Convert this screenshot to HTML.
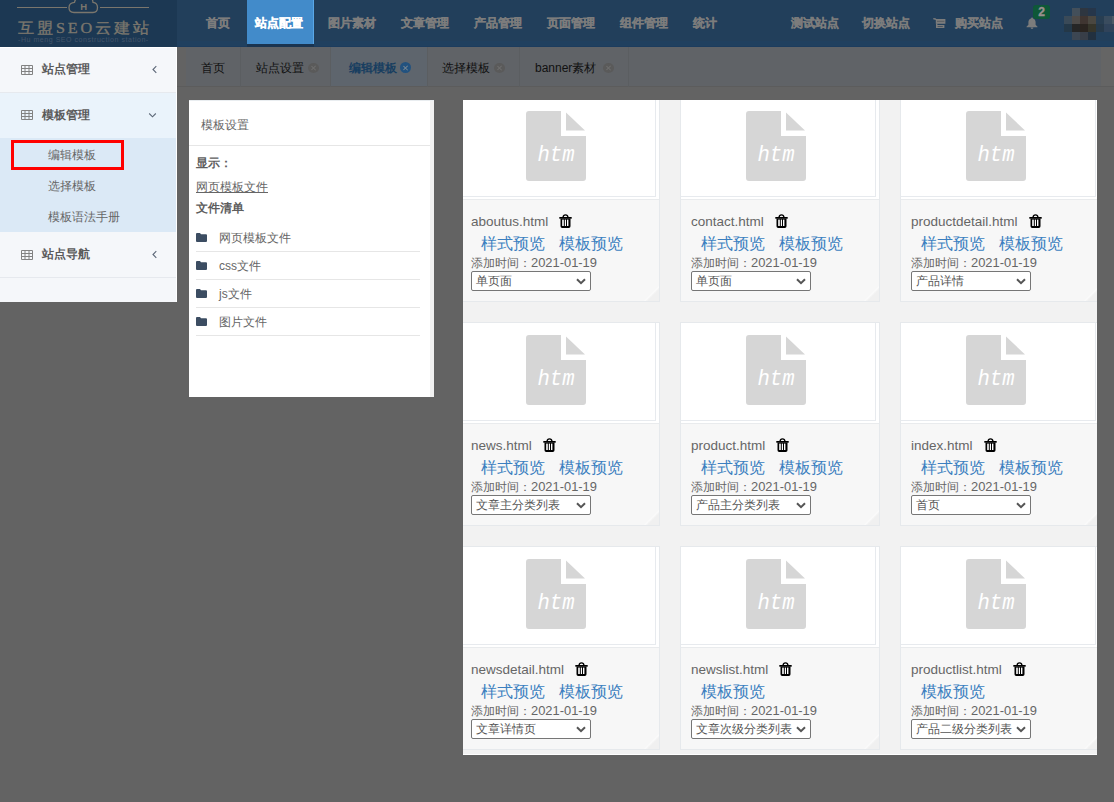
<!DOCTYPE html>
<html><head><meta charset="utf-8">
<style>
*{margin:0;padding:0;box-sizing:border-box}
html,body{width:1114px;height:802px;overflow:hidden}
body{position:relative;background:#636363;font-family:"Liberation Sans",sans-serif;color:#333}
.a{position:absolute;white-space:nowrap}
/* header */
#logo{left:0;top:0;width:177px;height:47px;background:#1c3853}
#nav{left:177px;top:0;width:937px;height:47px;background:#223f5b}
.nv{font-size:12px;line-height:12px;font-weight:bold;color:#7c7c7c;top:17px;-webkit-text-stroke:0.3px currentColor}
/* tabs bar */
#tabbar{left:186px;top:47px;width:928px;height:40px;background:#606367}
.tb{font-size:12px;line-height:12px;color:#111;top:62px}
.tsep{top:47px;width:1px;height:40px;background:#5b5e61}
.tx{width:11px;height:10px;border-radius:50%;background:#5a5a5a;top:63px}
.tx:before,.tx:after{content:"";position:absolute;left:4.5px;top:2px;width:1.4px;height:6px;background:#707070;transform:rotate(45deg)}
.tx:after{transform:rotate(-45deg)}
.act:before,.act:after{background:#7d8891;left:4.8px;top:2.5px}
/* sidebar */
#side{left:0;top:47px;width:177px;height:255px;background:#f5f7fa;border-right:1px solid #fff;border-top:1px solid #fff}
.si{font-size:12px;line-height:12px;font-weight:bold;color:#5a5a5a;left:42px}
.ss{font-size:12px;line-height:12px;color:#666;left:48px}
.gi{left:21px;width:12px;height:10px}
/* left modal */
#lp{left:189px;top:100px;width:245px;height:297px;background:#fff;border-top:1px solid #e9edf0}
.lt{font-size:12px;line-height:12px;color:#666}
.fold-ic{left:196px;width:11px;height:9px}
.fr{left:196px;width:224px;height:1px;background:#e6e6e6}
/* right modal */
#rp{left:463px;top:100px;width:634px;height:655px;background:#f2f2f2;overflow:hidden;border-bottom:1px solid #fff}
.card{position:absolute;width:200px;height:204px;background:#f7f7f7;border:1px solid #e6e9ec}
.card{background-clip:padding-box}
.card .w{position:absolute;left:0;top:0;width:198px;height:100px;background:#fff}
.card .img{position:absolute;left:0;top:0;width:195px;height:98px;background:#fff;border-right:1px solid #e7eaee;border-bottom:1px solid #e7eaee}
.card .ln{position:absolute;left:0;top:100px;width:198px;height:1px;background:#e9ebed}
.card .ic{position:absolute;left:65px;top:12px}
.card .fn{position:absolute;left:10px;top:115px;font-size:13.5px;line-height:16px;color:#666}
.card .tr{position:absolute;margin-left:11px;margin-top:0px}
.card .lk{position:absolute;left:20px;top:136px;font-size:16px;line-height:18px;color:#3b7fc0}
.card .l2{margin-left:14px}
.card .dt{position:absolute;left:10px;top:157px;font-size:12.5px;line-height:14px;color:#666}
.card .sel{position:absolute;left:10px;top:172px;width:120px;height:20px;border:1px solid #767676;border-radius:2px;background:#fff;font-size:12px;line-height:18px;color:#555;padding-left:4px}
.card .cv{position:absolute;right:4px;top:6px}
.card .fold{position:absolute;right:0;bottom:0;width:15px;height:15px;background:linear-gradient(135deg,rgba(0,0,0,0) 49%,#fcfcfc 51%,#f0f0f0 62%)}
</style></head><body>

<div class="a" id="logo"></div>
<div class="a" id="nav"></div>
<div class="a" style="left:177px;top:41px;width:937px;height:6px;background:#20405f"></div>
<div class="a" style="left:177px;top:46px;width:937px;height:1px;background:#1c3c5e"></div>
<div class="a" style="left:247px;top:0;width:67px;height:44px;background:#428bca;border-right:1px solid #5aa7e6"></div>
<div class="a" style="left:247px;top:44px;width:67px;height:3px;background:#1a3450"></div>
<div class="a nv" style="left:206px">首页</div>
<div class="a nv" style="left:255px;color:#fff">站点配置</div>
<div class="a nv" style="left:328px">图片素材</div>
<div class="a nv" style="left:401px">文章管理</div>
<div class="a nv" style="left:474px">产品管理</div>
<div class="a nv" style="left:547px">页面管理</div>
<div class="a nv" style="left:620px">组件管理</div>
<div class="a nv" style="left:693px">统计</div>
<div class="a nv" style="left:791px">测试站点</div>
<div class="a nv" style="left:862px">切换站点</div>
<svg class="a" style="left:933px;top:18px" width="13" height="11" viewBox="0 0 13 11"><path d="M0.3 0.6L3 1.2" stroke="#7c7c7c" stroke-width="1.4"/><rect x="2.8" y="1" width="9.6" height="4.8" fill="#7c7c7c"/><rect x="4" y="2.8" width="7.4" height="1" fill="#5a5e62"/><rect x="3" y="7" width="8.4" height="3" fill="#7c7c7c"/><rect x="3" y="5.5" width="1.4" height="2" fill="#7c7c7c"/><rect x="4.6" y="8" width="5.2" height="1" fill="#4a5560"/></svg>
<div class="a nv" style="left:955px">购买站点</div>
<svg class="a" style="left:1026px;top:17px" width="12" height="12" viewBox="0 0 12 12"><path d="M6 0.5C6.6 0.5 7 0.9 7 1.4C8.8 1.9 9.6 3.4 9.6 5.3V7.8L11.5 9.8V10.3H0.5V9.8L2.4 7.8V5.3C2.4 3.4 3.2 1.9 5 1.4C5 0.9 5.4 0.5 6 0.5Z" fill="#7c7c7c"/><path d="M4.6 10.6H7.4A1.4 1.4 0 0 1 4.6 10.6Z" fill="#7c7c7c"/></svg>
<div class="a" style="left:1033px;top:5px;width:17px;height:14px;background:#0e5838;border-radius:3px;color:#9a8f8f;font-size:12px;line-height:15px;font-weight:bold;text-align:center;-webkit-text-stroke:0.4px currentColor">2</div>
<!-- avatar mosaic -->
<div class="a" style="left:1072px;top:8px;width:8px;height:8px;background:#434f5a"></div>
<div class="a" style="left:1080px;top:8px;width:8px;height:8px;background:#2e3640"></div>
<div class="a" style="left:1088px;top:8px;width:8px;height:8px;background:#26364a"></div>
<div class="a" style="left:1064px;top:16px;width:8px;height:8px;background:#3a4a58"></div>
<div class="a" style="left:1072px;top:16px;width:8px;height:8px;background:#4d4a48"></div>
<div class="a" style="left:1080px;top:16px;width:8px;height:8px;background:#3f3531"></div>
<div class="a" style="left:1088px;top:16px;width:8px;height:8px;background:#4a4740"></div>
<div class="a" style="left:1096px;top:16px;width:8px;height:8px;background:#283e52"></div>
<div class="a" style="left:1104px;top:16px;width:8px;height:8px;background:#3a4c5e"></div>
<div class="a" style="left:1112px;top:16px;width:2px;height:8px;background:#4c5a66"></div>
<div class="a" style="left:1064px;top:24px;width:8px;height:8px;background:#243848"></div>
<div class="a" style="left:1072px;top:24px;width:8px;height:8px;background:#262626"></div>
<div class="a" style="left:1080px;top:24px;width:8px;height:8px;background:#2a2420"></div>
<div class="a" style="left:1088px;top:24px;width:8px;height:8px;background:#36352a"></div>
<div class="a" style="left:1096px;top:24px;width:8px;height:8px;background:#26394a"></div>
<div class="a" style="left:1104px;top:24px;width:10px;height:8px;background:#30435a"></div>
<div class="a" style="left:1072px;top:32px;width:8px;height:8px;background:#3c4652"></div>
<div class="a" style="left:1080px;top:32px;width:8px;height:8px;background:#383e48"></div>
<div class="a" style="left:1088px;top:32px;width:8px;height:8px;background:#22303f"></div>

<!-- logo -->
<div class="a" style="left:17px;top:7px;width:50px;height:1px;background:#7a766d"></div>
<div class="a" style="left:100px;top:7px;width:49px;height:1px;background:#7a766d"></div>
<svg class="a" style="left:68px;top:-4px" width="32" height="18" viewBox="0 0 32 18"><path d="M6 16.5H25C28 16.5 29.5 14.5 29.5 11.5C29.5 8.5 27.5 6.5 25 6.3C24.5 2 21 -0.5 16 -0.5C11 -0.5 7.5 2 6.5 6.3C3.5 6.5 1 8.5 1 11.5C1 14.5 3 16.5 6 16.5Z" fill="none" stroke="#7a766d" stroke-width="1.3"/><text x="15.6" y="14.2" text-anchor="middle" font-family="Liberation Sans" font-weight="bold" font-size="9.5" fill="#7a766d">H</text></svg>
<div class="a" style="left:18px;top:19px;font-family:'Liberation Serif',serif;font-size:15px;line-height:16px;color:#7a766d;letter-spacing:2.6px;transform:scaleX(1.08);top:20px;-webkit-text-stroke:0.35px currentColor;transform-origin:0 0">互盟SEO云建站</div>
<div class="a" style="left:18px;top:36px;font-size:7px;line-height:8px;color:#44566a;letter-spacing:0.55px">-Hu meng SEO construction station-</div>

<!-- tab bar -->
<div class="a" id="tabbar"></div>
<div class="a" style="left:330px;top:47px;width:97px;height:40px;background:#5e656d"></div>
<div class="a" style="left:1101px;top:47px;width:13px;height:40px;background:#656565"></div>
<div class="a" style="left:177px;top:86px;width:937px;height:1px;background:#5c5c5c"></div>
<div class="a tsep" style="left:240px"></div>
<div class="a tsep" style="left:330px"></div>
<div class="a tsep" style="left:427px"></div>
<div class="a tsep" style="left:519px"></div>
<div class="a tsep" style="left:628px"></div>
<div class="a tb" style="left:201px">首页</div>
<div class="a tb" style="left:256px">站点设置</div><div class="a tx" style="left:308px"></div>
<div class="a tb" style="left:349px;color:#183e60;font-weight:bold">编辑模板</div><div class="a tx act" style="left:400px;width:11px;height:11px;top:62px;background:#22527f"></div>
<div class="a tb" style="left:442px">选择模板</div><div class="a tx" style="left:494px"></div>
<div class="a tb" style="left:535px">banner素材</div><div class="a tx" style="left:603px"></div>

<!-- sidebar -->
<div class="a" id="side"></div>
<div class="a" style="left:0;top:92px;width:176px;height:1px;background:#e6e9ee"></div>
<div class="a" style="left:0;top:93px;width:176px;height:45px;background:#eaf3fb"></div>
<div class="a" style="left:0;top:138px;width:176px;height:94px;background:#dbe9f6"></div>
<div class="a" style="left:0;top:277px;width:176px;height:1px;background:#e6e9ee"></div>
<svg class="a gi" style="top:65px" viewBox="0 0 12 10"><path d="M0.5 0.5H11.5V9.5H0.5ZM0.5 3.5H11.5M0.5 6.5H11.5M4 0.5V9.5M8 0.5V9.5" fill="none" stroke="#828282" stroke-width="1"/></svg>
<svg class="a gi" style="top:110px" viewBox="0 0 12 10"><path d="M0.5 0.5H11.5V9.5H0.5ZM0.5 3.5H11.5M0.5 6.5H11.5M4 0.5V9.5M8 0.5V9.5" fill="none" stroke="#828282" stroke-width="1"/></svg>
<svg class="a gi" style="top:250px" viewBox="0 0 12 10"><path d="M0.5 0.5H11.5V9.5H0.5ZM0.5 3.5H11.5M0.5 6.5H11.5M4 0.5V9.5M8 0.5V9.5" fill="none" stroke="#828282" stroke-width="1"/></svg>
<div class="a si" style="top:63px">站点管理</div>
<div class="a si" style="top:109px">模板管理</div>
<div class="a si" style="top:248px">站点导航</div>
<svg class="a" style="left:151px;top:65px" width="7" height="9" viewBox="0 0 7 9"><path d="M5.3 1.2L2 4.5L5.3 7.8" fill="none" stroke="#5d6878" stroke-width="1.1"/></svg>
<svg class="a" style="left:151px;top:250px" width="7" height="9" viewBox="0 0 7 9"><path d="M5.3 1.2L2 4.5L5.3 7.8" fill="none" stroke="#5d6878" stroke-width="1.1"/></svg>
<svg class="a" style="left:148px;top:112px" width="9" height="7" viewBox="0 0 9 7"><path d="M1.2 1.5L4.5 4.8L7.8 1.5" fill="none" stroke="#5d6878" stroke-width="1.1"/></svg>
<div class="a" style="left:11px;top:140px;width:113px;height:30px;border:3px solid #ff0000"></div>
<div class="a ss" style="top:149px">编辑模板</div>
<div class="a ss" style="top:180px">选择模板</div>
<div class="a ss" style="top:211px">模板语法手册</div>

<!-- left modal -->
<div class="a" id="lp"></div>
<div class="a" style="left:430px;top:101px;width:4px;height:296px;background:#f1f1f1"></div>
<div class="a" style="left:189px;top:145px;width:241px;height:1px;background:#e6e6e6"></div>
<div class="a lt" style="left:201px;top:119px">模板设置</div>
<div class="a lt" style="left:196px;top:157px;font-weight:bold;color:#5e5e5e">显示：</div>
<div class="a lt" style="left:196px;top:181px;text-decoration:underline;line-height:13px">网页模板文件</div>
<div class="a lt" style="left:196px;top:202px;font-weight:bold;color:#5e5e5e">文件清单</div>
<svg class="a fold-ic" style="top:233px" viewBox="0 0 11 9"><path d="M0 1A1 1 0 0 1 1 0H4L5 1.3H10A1 1 0 0 1 11 2.3V8A1 1 0 0 1 10 9H1A1 1 0 0 1 0 8Z" fill="#3c4d62"/></svg>
<svg class="a fold-ic" style="top:261px" viewBox="0 0 11 9"><path d="M0 1A1 1 0 0 1 1 0H4L5 1.3H10A1 1 0 0 1 11 2.3V8A1 1 0 0 1 10 9H1A1 1 0 0 1 0 8Z" fill="#3c4d62"/></svg>
<svg class="a fold-ic" style="top:289px" viewBox="0 0 11 9"><path d="M0 1A1 1 0 0 1 1 0H4L5 1.3H10A1 1 0 0 1 11 2.3V8A1 1 0 0 1 10 9H1A1 1 0 0 1 0 8Z" fill="#3c4d62"/></svg>
<svg class="a fold-ic" style="top:317px" viewBox="0 0 11 9"><path d="M0 1A1 1 0 0 1 1 0H4L5 1.3H10A1 1 0 0 1 11 2.3V8A1 1 0 0 1 10 9H1A1 1 0 0 1 0 8Z" fill="#3c4d62"/></svg>
<div class="a lt" style="left:219px;top:232px">网页模板文件</div>
<div class="a lt" style="left:219px;top:260px">css文件</div>
<div class="a lt" style="left:219px;top:288px">js文件</div>
<div class="a lt" style="left:219px;top:316px">图片文件</div>
<div class="a fr" style="top:251px"></div>
<div class="a fr" style="top:279px"></div>
<div class="a fr" style="top:307px"></div>
<div class="a fr" style="top:335px"></div>

<!-- right modal -->
<div class="a" id="rp">
<div class="card" style="left:-3px;top:-2px"><div class="w"></div><div class="img"></div><div class="ln"></div><svg class="ic" width="62" height="72" viewBox="0 0 62 72"><path d="M3 0H35V25H60V67A3 3 0 0 1 57 70H3A3 3 0 0 1 0 67V3A3 3 0 0 1 3 0Z" fill="#d6d6d6"/><path d="M40 1.5L59 19.5H40Z" fill="#d6d6d6"/><text x="11.5" y="49.5" font-family="Liberation Mono" font-style="italic" font-size="21.5" fill="#fff" textLength="37" lengthAdjust="spacingAndGlyphs">htm</text></svg><div class="fn">aboutus.html<svg class="tr" width="13" height="15" viewBox="0 0 13 15"><path d="M4 3.4C4.2 1.3 4.9 0.8 6.5 0.8S8.8 1.3 9 3.4" fill="none" stroke="#000" stroke-width="1.3"/><rect x="0.3" y="3" width="12.4" height="1.7" fill="#000"/><path d="M1.5 4.4H11.5V12.3A1.7 1.7 0 0 1 9.8 14H3.2A1.7 1.7 0 0 1 1.5 12.3Z" fill="#000"/><rect x="3.2" y="5.6" width="1.6" height="6.4" fill="#fff"/><rect x="5.8" y="5.6" width="1.2" height="6.4" fill="#fff"/><rect x="8" y="5.6" width="1.4" height="6.4" fill="#fff"/></svg></div><div class="lk"><span>样式预览</span><span class="l2">模板预览</span></div><div class="dt"><span style="font-size:12px">添加时间：</span><span style="font-size:12.9px">2021-01-19</span></div><div class="sel">单页面<svg class="cv" width="10" height="7" viewBox="0 0 10 7"><path d="M1 1.2L5 5.2L9 1.2" fill="none" stroke="#555" stroke-width="2"/></svg></div><div class="fold"></div></div>
<div class="card" style="left:217px;top:-2px"><div class="w"></div><div class="img"></div><div class="ln"></div><svg class="ic" width="62" height="72" viewBox="0 0 62 72"><path d="M3 0H35V25H60V67A3 3 0 0 1 57 70H3A3 3 0 0 1 0 67V3A3 3 0 0 1 3 0Z" fill="#d6d6d6"/><path d="M40 1.5L59 19.5H40Z" fill="#d6d6d6"/><text x="11.5" y="49.5" font-family="Liberation Mono" font-style="italic" font-size="21.5" fill="#fff" textLength="37" lengthAdjust="spacingAndGlyphs">htm</text></svg><div class="fn">contact.html<svg class="tr" width="13" height="15" viewBox="0 0 13 15"><path d="M4 3.4C4.2 1.3 4.9 0.8 6.5 0.8S8.8 1.3 9 3.4" fill="none" stroke="#000" stroke-width="1.3"/><rect x="0.3" y="3" width="12.4" height="1.7" fill="#000"/><path d="M1.5 4.4H11.5V12.3A1.7 1.7 0 0 1 9.8 14H3.2A1.7 1.7 0 0 1 1.5 12.3Z" fill="#000"/><rect x="3.2" y="5.6" width="1.6" height="6.4" fill="#fff"/><rect x="5.8" y="5.6" width="1.2" height="6.4" fill="#fff"/><rect x="8" y="5.6" width="1.4" height="6.4" fill="#fff"/></svg></div><div class="lk"><span>样式预览</span><span class="l2">模板预览</span></div><div class="dt"><span style="font-size:12px">添加时间：</span><span style="font-size:12.9px">2021-01-19</span></div><div class="sel">单页面<svg class="cv" width="10" height="7" viewBox="0 0 10 7"><path d="M1 1.2L5 5.2L9 1.2" fill="none" stroke="#555" stroke-width="2"/></svg></div><div class="fold"></div></div>
<div class="card" style="left:437px;top:-2px"><div class="w"></div><div class="img"></div><div class="ln"></div><svg class="ic" width="62" height="72" viewBox="0 0 62 72"><path d="M3 0H35V25H60V67A3 3 0 0 1 57 70H3A3 3 0 0 1 0 67V3A3 3 0 0 1 3 0Z" fill="#d6d6d6"/><path d="M40 1.5L59 19.5H40Z" fill="#d6d6d6"/><text x="11.5" y="49.5" font-family="Liberation Mono" font-style="italic" font-size="21.5" fill="#fff" textLength="37" lengthAdjust="spacingAndGlyphs">htm</text></svg><div class="fn">productdetail.html<svg class="tr" width="13" height="15" viewBox="0 0 13 15"><path d="M4 3.4C4.2 1.3 4.9 0.8 6.5 0.8S8.8 1.3 9 3.4" fill="none" stroke="#000" stroke-width="1.3"/><rect x="0.3" y="3" width="12.4" height="1.7" fill="#000"/><path d="M1.5 4.4H11.5V12.3A1.7 1.7 0 0 1 9.8 14H3.2A1.7 1.7 0 0 1 1.5 12.3Z" fill="#000"/><rect x="3.2" y="5.6" width="1.6" height="6.4" fill="#fff"/><rect x="5.8" y="5.6" width="1.2" height="6.4" fill="#fff"/><rect x="8" y="5.6" width="1.4" height="6.4" fill="#fff"/></svg></div><div class="lk"><span>样式预览</span><span class="l2">模板预览</span></div><div class="dt"><span style="font-size:12px">添加时间：</span><span style="font-size:12.9px">2021-01-19</span></div><div class="sel">产品详情<svg class="cv" width="10" height="7" viewBox="0 0 10 7"><path d="M1 1.2L5 5.2L9 1.2" fill="none" stroke="#555" stroke-width="2"/></svg></div><div class="fold"></div></div>
<div class="card" style="left:-3px;top:222px"><div class="w"></div><div class="img"></div><div class="ln"></div><svg class="ic" width="62" height="72" viewBox="0 0 62 72"><path d="M3 0H35V25H60V67A3 3 0 0 1 57 70H3A3 3 0 0 1 0 67V3A3 3 0 0 1 3 0Z" fill="#d6d6d6"/><path d="M40 1.5L59 19.5H40Z" fill="#d6d6d6"/><text x="11.5" y="49.5" font-family="Liberation Mono" font-style="italic" font-size="21.5" fill="#fff" textLength="37" lengthAdjust="spacingAndGlyphs">htm</text></svg><div class="fn">news.html<svg class="tr" width="13" height="15" viewBox="0 0 13 15"><path d="M4 3.4C4.2 1.3 4.9 0.8 6.5 0.8S8.8 1.3 9 3.4" fill="none" stroke="#000" stroke-width="1.3"/><rect x="0.3" y="3" width="12.4" height="1.7" fill="#000"/><path d="M1.5 4.4H11.5V12.3A1.7 1.7 0 0 1 9.8 14H3.2A1.7 1.7 0 0 1 1.5 12.3Z" fill="#000"/><rect x="3.2" y="5.6" width="1.6" height="6.4" fill="#fff"/><rect x="5.8" y="5.6" width="1.2" height="6.4" fill="#fff"/><rect x="8" y="5.6" width="1.4" height="6.4" fill="#fff"/></svg></div><div class="lk"><span>样式预览</span><span class="l2">模板预览</span></div><div class="dt"><span style="font-size:12px">添加时间：</span><span style="font-size:12.9px">2021-01-19</span></div><div class="sel">文章主分类列表<svg class="cv" width="10" height="7" viewBox="0 0 10 7"><path d="M1 1.2L5 5.2L9 1.2" fill="none" stroke="#555" stroke-width="2"/></svg></div><div class="fold"></div></div>
<div class="card" style="left:217px;top:222px"><div class="w"></div><div class="img"></div><div class="ln"></div><svg class="ic" width="62" height="72" viewBox="0 0 62 72"><path d="M3 0H35V25H60V67A3 3 0 0 1 57 70H3A3 3 0 0 1 0 67V3A3 3 0 0 1 3 0Z" fill="#d6d6d6"/><path d="M40 1.5L59 19.5H40Z" fill="#d6d6d6"/><text x="11.5" y="49.5" font-family="Liberation Mono" font-style="italic" font-size="21.5" fill="#fff" textLength="37" lengthAdjust="spacingAndGlyphs">htm</text></svg><div class="fn">product.html<svg class="tr" width="13" height="15" viewBox="0 0 13 15"><path d="M4 3.4C4.2 1.3 4.9 0.8 6.5 0.8S8.8 1.3 9 3.4" fill="none" stroke="#000" stroke-width="1.3"/><rect x="0.3" y="3" width="12.4" height="1.7" fill="#000"/><path d="M1.5 4.4H11.5V12.3A1.7 1.7 0 0 1 9.8 14H3.2A1.7 1.7 0 0 1 1.5 12.3Z" fill="#000"/><rect x="3.2" y="5.6" width="1.6" height="6.4" fill="#fff"/><rect x="5.8" y="5.6" width="1.2" height="6.4" fill="#fff"/><rect x="8" y="5.6" width="1.4" height="6.4" fill="#fff"/></svg></div><div class="lk"><span>样式预览</span><span class="l2">模板预览</span></div><div class="dt"><span style="font-size:12px">添加时间：</span><span style="font-size:12.9px">2021-01-19</span></div><div class="sel">产品主分类列表<svg class="cv" width="10" height="7" viewBox="0 0 10 7"><path d="M1 1.2L5 5.2L9 1.2" fill="none" stroke="#555" stroke-width="2"/></svg></div><div class="fold"></div></div>
<div class="card" style="left:437px;top:222px"><div class="w"></div><div class="img"></div><div class="ln"></div><svg class="ic" width="62" height="72" viewBox="0 0 62 72"><path d="M3 0H35V25H60V67A3 3 0 0 1 57 70H3A3 3 0 0 1 0 67V3A3 3 0 0 1 3 0Z" fill="#d6d6d6"/><path d="M40 1.5L59 19.5H40Z" fill="#d6d6d6"/><text x="11.5" y="49.5" font-family="Liberation Mono" font-style="italic" font-size="21.5" fill="#fff" textLength="37" lengthAdjust="spacingAndGlyphs">htm</text></svg><div class="fn">index.html<svg class="tr" width="13" height="15" viewBox="0 0 13 15"><path d="M4 3.4C4.2 1.3 4.9 0.8 6.5 0.8S8.8 1.3 9 3.4" fill="none" stroke="#000" stroke-width="1.3"/><rect x="0.3" y="3" width="12.4" height="1.7" fill="#000"/><path d="M1.5 4.4H11.5V12.3A1.7 1.7 0 0 1 9.8 14H3.2A1.7 1.7 0 0 1 1.5 12.3Z" fill="#000"/><rect x="3.2" y="5.6" width="1.6" height="6.4" fill="#fff"/><rect x="5.8" y="5.6" width="1.2" height="6.4" fill="#fff"/><rect x="8" y="5.6" width="1.4" height="6.4" fill="#fff"/></svg></div><div class="lk"><span>样式预览</span><span class="l2">模板预览</span></div><div class="dt"><span style="font-size:12px">添加时间：</span><span style="font-size:12.9px">2021-01-19</span></div><div class="sel">首页<svg class="cv" width="10" height="7" viewBox="0 0 10 7"><path d="M1 1.2L5 5.2L9 1.2" fill="none" stroke="#555" stroke-width="2"/></svg></div><div class="fold"></div></div>
<div class="card" style="left:-3px;top:446px"><div class="w"></div><div class="img"></div><div class="ln"></div><svg class="ic" width="62" height="72" viewBox="0 0 62 72"><path d="M3 0H35V25H60V67A3 3 0 0 1 57 70H3A3 3 0 0 1 0 67V3A3 3 0 0 1 3 0Z" fill="#d6d6d6"/><path d="M40 1.5L59 19.5H40Z" fill="#d6d6d6"/><text x="11.5" y="49.5" font-family="Liberation Mono" font-style="italic" font-size="21.5" fill="#fff" textLength="37" lengthAdjust="spacingAndGlyphs">htm</text></svg><div class="fn">newsdetail.html<svg class="tr" width="13" height="15" viewBox="0 0 13 15"><path d="M4 3.4C4.2 1.3 4.9 0.8 6.5 0.8S8.8 1.3 9 3.4" fill="none" stroke="#000" stroke-width="1.3"/><rect x="0.3" y="3" width="12.4" height="1.7" fill="#000"/><path d="M1.5 4.4H11.5V12.3A1.7 1.7 0 0 1 9.8 14H3.2A1.7 1.7 0 0 1 1.5 12.3Z" fill="#000"/><rect x="3.2" y="5.6" width="1.6" height="6.4" fill="#fff"/><rect x="5.8" y="5.6" width="1.2" height="6.4" fill="#fff"/><rect x="8" y="5.6" width="1.4" height="6.4" fill="#fff"/></svg></div><div class="lk"><span>样式预览</span><span class="l2">模板预览</span></div><div class="dt"><span style="font-size:12px">添加时间：</span><span style="font-size:12.9px">2021-01-19</span></div><div class="sel">文章详情页<svg class="cv" width="10" height="7" viewBox="0 0 10 7"><path d="M1 1.2L5 5.2L9 1.2" fill="none" stroke="#555" stroke-width="2"/></svg></div><div class="fold"></div></div>
<div class="card" style="left:217px;top:446px"><div class="w"></div><div class="img"></div><div class="ln"></div><svg class="ic" width="62" height="72" viewBox="0 0 62 72"><path d="M3 0H35V25H60V67A3 3 0 0 1 57 70H3A3 3 0 0 1 0 67V3A3 3 0 0 1 3 0Z" fill="#d6d6d6"/><path d="M40 1.5L59 19.5H40Z" fill="#d6d6d6"/><text x="11.5" y="49.5" font-family="Liberation Mono" font-style="italic" font-size="21.5" fill="#fff" textLength="37" lengthAdjust="spacingAndGlyphs">htm</text></svg><div class="fn">newslist.html<svg class="tr" width="13" height="15" viewBox="0 0 13 15"><path d="M4 3.4C4.2 1.3 4.9 0.8 6.5 0.8S8.8 1.3 9 3.4" fill="none" stroke="#000" stroke-width="1.3"/><rect x="0.3" y="3" width="12.4" height="1.7" fill="#000"/><path d="M1.5 4.4H11.5V12.3A1.7 1.7 0 0 1 9.8 14H3.2A1.7 1.7 0 0 1 1.5 12.3Z" fill="#000"/><rect x="3.2" y="5.6" width="1.6" height="6.4" fill="#fff"/><rect x="5.8" y="5.6" width="1.2" height="6.4" fill="#fff"/><rect x="8" y="5.6" width="1.4" height="6.4" fill="#fff"/></svg></div><div class="lk"><span>模板预览</span></div><div class="dt"><span style="font-size:12px">添加时间：</span><span style="font-size:12.9px">2021-01-19</span></div><div class="sel">文章次级分类列表<svg class="cv" width="10" height="7" viewBox="0 0 10 7"><path d="M1 1.2L5 5.2L9 1.2" fill="none" stroke="#555" stroke-width="2"/></svg></div><div class="fold"></div></div>
<div class="card" style="left:437px;top:446px"><div class="w"></div><div class="img"></div><div class="ln"></div><svg class="ic" width="62" height="72" viewBox="0 0 62 72"><path d="M3 0H35V25H60V67A3 3 0 0 1 57 70H3A3 3 0 0 1 0 67V3A3 3 0 0 1 3 0Z" fill="#d6d6d6"/><path d="M40 1.5L59 19.5H40Z" fill="#d6d6d6"/><text x="11.5" y="49.5" font-family="Liberation Mono" font-style="italic" font-size="21.5" fill="#fff" textLength="37" lengthAdjust="spacingAndGlyphs">htm</text></svg><div class="fn">productlist.html<svg class="tr" width="13" height="15" viewBox="0 0 13 15"><path d="M4 3.4C4.2 1.3 4.9 0.8 6.5 0.8S8.8 1.3 9 3.4" fill="none" stroke="#000" stroke-width="1.3"/><rect x="0.3" y="3" width="12.4" height="1.7" fill="#000"/><path d="M1.5 4.4H11.5V12.3A1.7 1.7 0 0 1 9.8 14H3.2A1.7 1.7 0 0 1 1.5 12.3Z" fill="#000"/><rect x="3.2" y="5.6" width="1.6" height="6.4" fill="#fff"/><rect x="5.8" y="5.6" width="1.2" height="6.4" fill="#fff"/><rect x="8" y="5.6" width="1.4" height="6.4" fill="#fff"/></svg></div><div class="lk"><span>模板预览</span></div><div class="dt"><span style="font-size:12px">添加时间：</span><span style="font-size:12.9px">2021-01-19</span></div><div class="sel">产品二级分类列表<svg class="cv" width="10" height="7" viewBox="0 0 10 7"><path d="M1 1.2L5 5.2L9 1.2" fill="none" stroke="#555" stroke-width="2"/></svg></div><div class="fold"></div></div>
</div>

</body></html>
